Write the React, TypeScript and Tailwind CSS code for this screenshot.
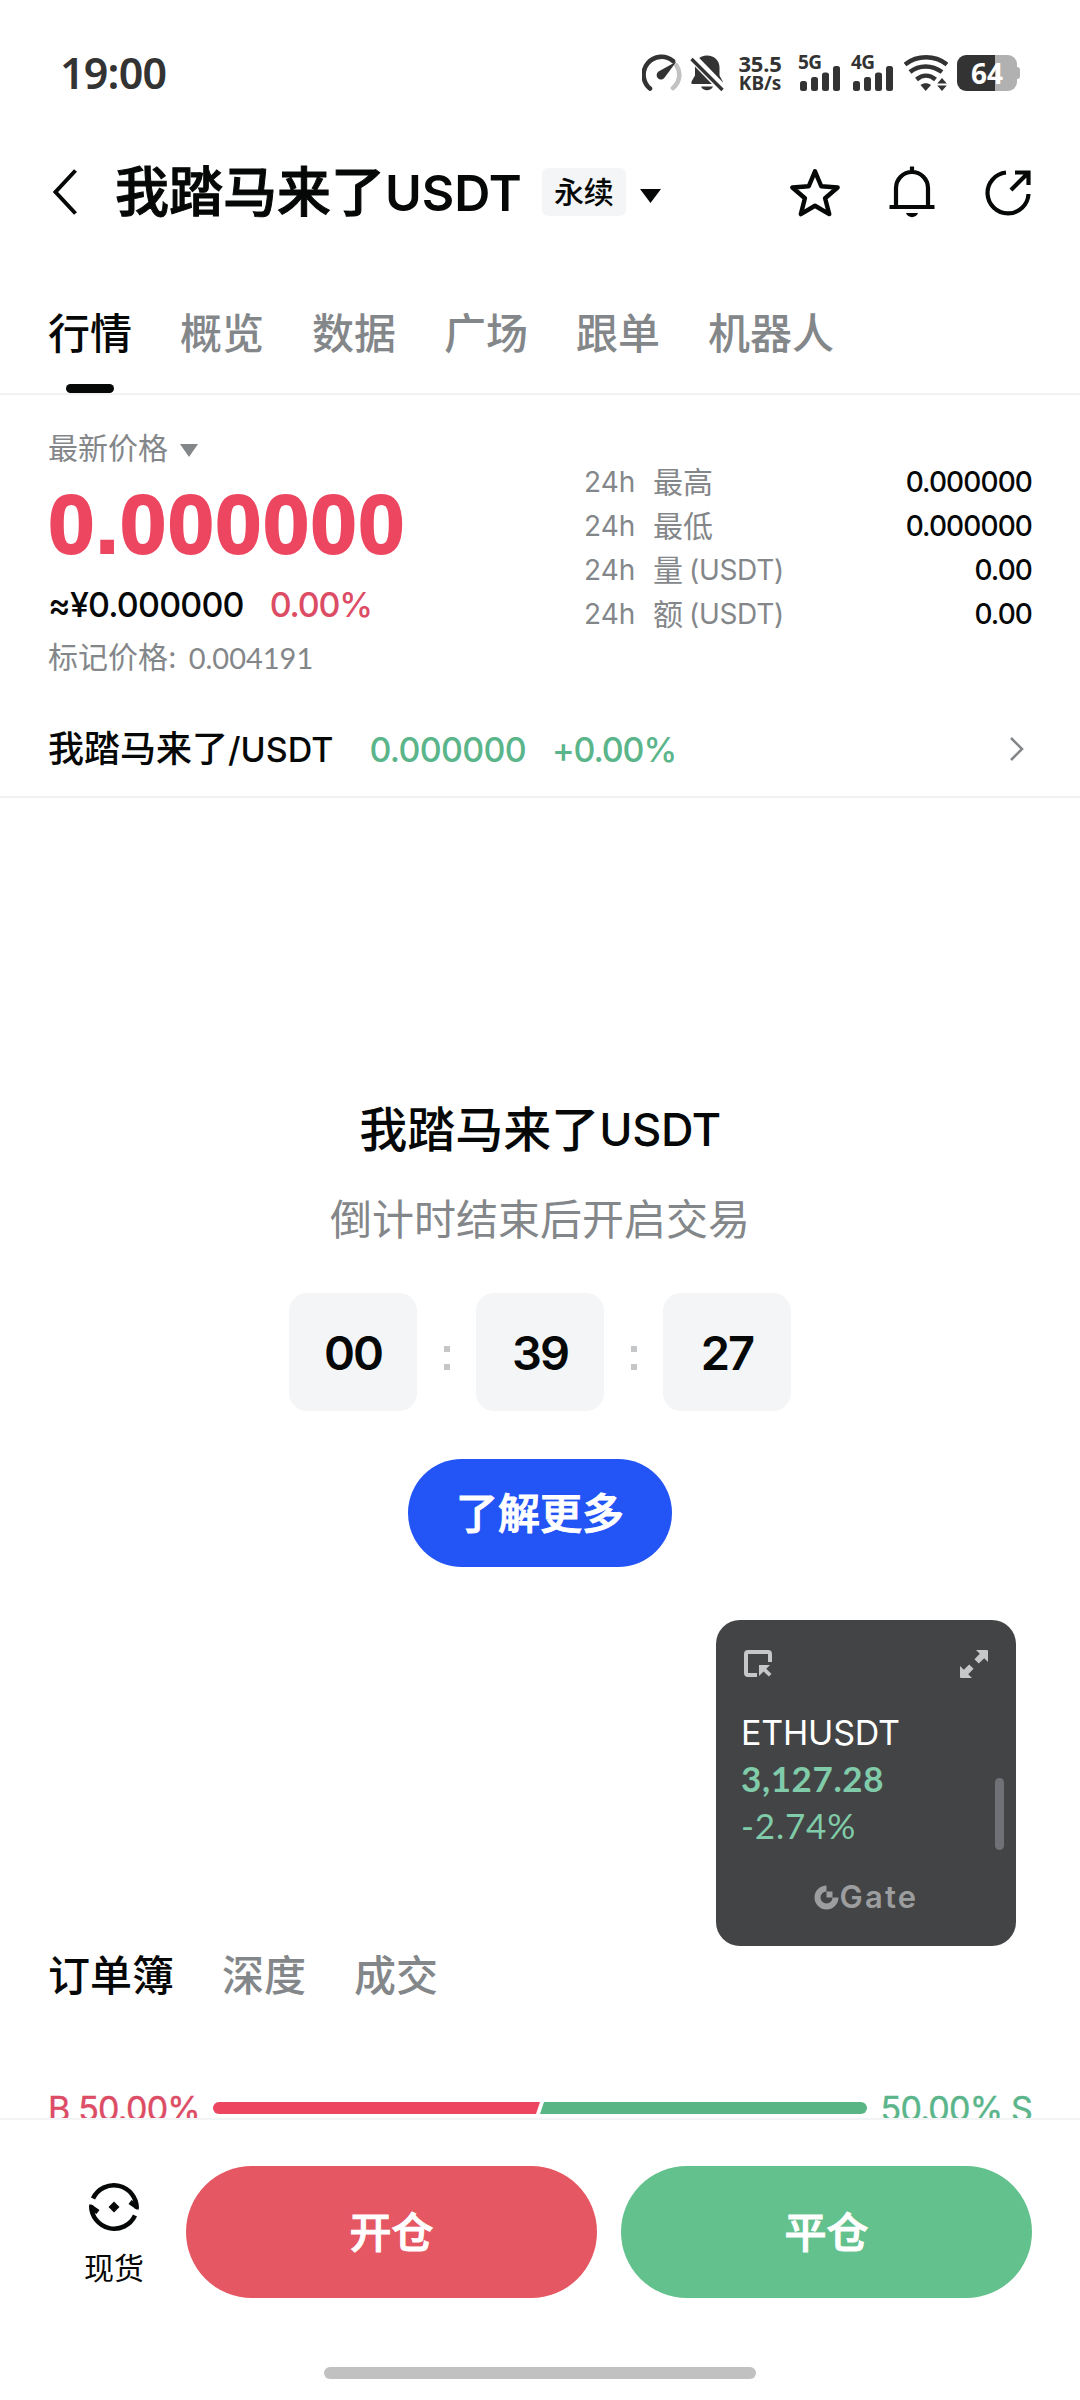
const TABS = ['行情', '概览', '数据', '广场', '跟单', '机器人'];
const BOOK_TABS = ['订单簿', '深度', '成交'];
const COUNTDOWN = ['00', '39', '27'];

const STATS = [
  { label: '最高', unit: '', value: '0.000000' },
  { label: '最低', unit: '', value: '0.000000' },
  { label: '量', unit: '(USDT)', value: '0.00' },
  { label: '额', unit: '(USDT)', value: '0.00' },
];

function Signal({ label }: { label: string }) {
  return (
    <div className="flex h-9 w-[42px] flex-col">
      <span className="h-[11px] font-['Noto_Sans'] text-[19px] leading-[15px] font-bold tracking-[-0.5px]">{label}</span>
      <svg width="42" height="25" viewBox="0 0 42 25" fill="currentColor">
        <rect x="2" y="15" width="7" height="10" rx="2.5" />
        <rect x="13" y="11" width="7" height="14" rx="2.5" />
        <rect x="24" y="6.500" width="7" height="18.500" rx="2.500" />
        <rect x="35" y="0" width="7" height="25" rx="2.5" />
      </svg>
    </div>
  );
}

function StatusBar() {
  return (
    <div className="flex h-[146px] items-center pr-[60px] pl-[60px] text-[#333333]">
      <span className="font-['Noto_Sans'] text-[43px] font-semibold tracking-[-0.8px]">19:00</span>
      <div className="ml-auto flex items-center">
        <svg width="40" height="38" viewBox="0 0 40 38" fill="none" strokeWidth="4.600" strokeLinecap="round">
          <path d="M34.500 11.500A17 17 0 0 1 31 34" stroke="#c2c2c2" />
          <path d="M8 34.500A17.500 17.500 0 1 1 31 7" stroke="currentColor" />
          <path d="M34.500 7.500L23 23a4.400 4.400 0 1 1-6.500-5.500z" fill="currentColor" />
        </svg>
        <svg className="ml-2" width="34" height="38" viewBox="0 0 34 38" fill="currentColor">
          <path d="M17 1.500c7.500 0 12.500 5 12.500 12v8l3.500 6.500v2H1.500v-2.500L5 21.500v-8c0-7 4.500-12 12-12z" />
          <path d="M11 32.500h12c-2 5-10 5-12 0z" />
          <path d="M2 3L34 36" stroke="#fff" strokeWidth="9" />
          <path d="M1.500 5L32.500 36" stroke="currentColor" strokeWidth="3.400" />
        </svg>
        <div className="ml-[13px] flex w-[46px] flex-col items-center font-['Noto_Sans'] leading-[20px] font-bold">
          <span className="text-[22px] tracking-[-0.2px]">35.5</span>
          <span className="text-[19px] tracking-[-0.1px]">KB/s</span>
        </div>
        <div className="ml-[15px]">
          <Signal label="5G" />
        </div>
        <div className="ml-[11px]">
          <Signal label="4G" />
        </div>
        <svg className="ml-[11px]" width="44" height="38" viewBox="0 0 44 38" fill="none" stroke="currentColor" strokeWidth="4.500">
          <path d="M1 10.500C13 .8 31 .8 43 10.500" />
          <path d="M6 18c9-7.500 22-7.500 32 0" />
          <path d="M12.500 25.500c6-5 13-5 19 0" />
          <path d="M16.500 31c3-2.500 7.500-2.500 10.500 0L21.700 37z" fill="currentColor" stroke="none" />
          <path d="M38 24l4.800 5.500h-9.600zM38 37l4.800-5.500h-9.600z" fill="currentColor" stroke="none" />
        </svg>
        <div className="ml-[9px] flex items-center">
          <div className="flex h-9 w-[60px] items-center justify-center rounded-[9px] bg-linear-to-r from-[#333333] from-64% to-[#b1b1b1] to-64%">
            <span className="font-['Noto_Sans'] text-[28px] font-bold text-white">64</span>
          </div>
          <div className="h-3 w-[3px] rounded-r-[3px] bg-[#b1b1b1]" />
        </div>
      </div>
    </div>
  );
}

function Header() {
  return (
    <header className="flex h-[92px] items-center pr-12 pl-[52px] text-[#060808]">
      <svg width="26" height="48" viewBox="0 0 26 48" fill="none" stroke="currentColor" strokeWidth="4">
        <path d="M23.500 2.500L3.500 24l20 21.500" />
      </svg>
      <h1 className="ml-[37px] flex items-center pt-[2px] text-[54px] leading-none font-medium [-webkit-text-stroke:1px_currentColor]">
        我踏马来了<span className="font-['Inter'] text-[50px] font-semibold [-webkit-text-stroke:0]">USDT</span>
      </h1>
      <span className="ml-5 flex h-12 w-[84px] items-center justify-center rounded-md bg-[#f4f5f6] pt-[1px] text-[30px] font-medium">永续</span>
      <svg className="mt-[7px] ml-[14px]" width="21" height="14" viewBox="0 0 21 14" fill="currentColor">
        <path d="M0 0h21L10.500 14z" />
      </svg>
      <div className="ml-auto flex items-center gap-12">
        <svg width="50" height="50" viewBox="0 0 52 52" fill="none" stroke="currentColor" strokeWidth="4.600" strokeLinejoin="round">
          <path d="M26 4.500l6.500 15.500 17 1.300-13 11.200 4.300 16.500L26 40.300 11.300 49l4.200-16.500-13-11.200 17-1.300z" />
        </svg>
        <svg width="48" height="52" viewBox="0 0 48 52" fill="none" stroke="currentColor" strokeWidth="4.200">
          <path d="M24 .5V6M8 41V22a16 16 0 0 1 32 0v19M1.500 41h45" />
          <path d="M18 47h12c-1.500 5.500-10.500 5.500-12 0z" fill="currentColor" stroke="none" />
        </svg>
        <svg width="48" height="48" viewBox="0 0 48 48" fill="none" stroke="currentColor" strokeWidth="4.200">
          <path d="M22 4.500A20.500 20.500 0 1 0 44.500 26" />
          <path d="M27 22L43 6M31 4.500h13.500V17" />
        </svg>
      </div>
    </header>
  );
}

function Tabs() {
  return (
    <nav className="flex h-[157px] gap-12 border-b-2 border-[#f1f2f3] px-12 pt-[66px] text-[42px] leading-[60px] font-medium text-[#84878a]">
      {TABS.map((tab, i) => (
        <div key={tab} className={i === 0 ? 'flex flex-col items-center text-[#060808]' : ''}>
          {tab}
          {i === 0 && <div className="mt-5 h-[9px] w-12 rounded-full bg-[#060808]" />}
        </div>
      ))}
    </nav>
  );
}

function PriceSummary() {
  return (
    <section className="flex h-[307px] justify-between px-12 pt-[31px]">
      <div className="flex flex-col text-[#84878a]">
        <div className="flex h-11 items-center text-[30px]">
          最新价格
          <svg className="mt-1 ml-3" width="18" height="13" viewBox="0 0 18 13" fill="currentColor">
            <path d="M0 0h18L9 13z" />
          </svg>
        </div>
        <div className="font-['Liberation_Sans'] text-[84px] leading-[108px] font-bold tracking-[0.9px] text-[#ed4660] [-webkit-text-stroke:1.8px_currentColor]">0.000000</div>
        <div className="flex h-[53px] items-center gap-[26px] text-[34px] font-medium">
          <span className="tracking-[-0.8px] text-[#060808]">≈¥0.000000</span>
          <span className="tracking-[-1.200px] text-[#dc4c65]">0.00%</span>
        </div>
        <div className="flex h-[52px] items-center gap-3 pt-[1px] text-[30px]">
          标记价格:<span className="font-['Lato'] text-[29px]">0.004191</span>
        </div>
      </div>
      <div className="w-[448px] pt-[34px] text-[28px]">
        {STATS.map((s) => (
          <div key={s.label} className="flex h-11 items-center text-[#84878a]">
            <span className="w-[69px]">24h</span>
            <span className="text-[30px]">{s.label}</span>
            <span className="ml-[6px] tracking-[-0.3px]">{s.unit}</span>
            <span className="ml-auto font-medium tracking-[-0.9px] text-[#060808]">{s.value}</span>
          </div>
        ))}
      </div>
    </section>
  );
}

function SpotPair() {
  return (
    <div className="flex h-24 items-center border-b-2 border-[#f1f2f3] px-12 text-[34px] font-medium">
      <div className="flex items-center text-[#060808]">
        <span className="text-[36px]">我踏马来了</span>
        <span>/USDT</span>
      </div>
      <span className="ml-9 tracking-[-0.7px] text-[#5ab58a]">0.000000</span>
      <span className="ml-[26px] tracking-[-1.100px] text-[#5ab58a]">+0.00%</span>
      <svg className="mr-2 ml-auto" width="15" height="26" viewBox="0 0 15 26" fill="none" stroke="#84878a" strokeWidth="2.600">
        <path d="M2 2l11 11L2 24" />
      </svg>
    </div>
  );
}

function Countdown() {
  return (
    <section className="flex flex-col items-center pt-[302px]">
      <h2 className="flex items-center text-[48px] leading-[60px] font-medium text-[#060808]">
        我踏马来了<span className="text-[45px] tracking-[-0.3px]">USDT</span>
      </h2>
      <p className="mt-[30px] text-[42px] leading-[60px] text-[#84878a]">倒计时结束后开启交易</p>
      <div className="mt-[43px] flex items-center">
        {COUNTDOWN.map((n, i) => (
          <div key={n} className="flex items-center">
            {i > 0 && (
              <div className="flex w-[59px] flex-col items-center gap-3 pt-3">
                <i className="size-[6px] bg-[#c4c6c8]" />
                <i className="size-[6px] bg-[#c4c6c8]" />
              </div>
            )}
            <div className="flex h-[118px] w-32 items-center justify-center rounded-[18px] bg-[#f4f5f7] pt-[2px] text-[47px] font-semibold tracking-[-2px] text-[#060808]">{n}</div>
          </div>
        ))}
      </div>
      <button className="mt-12 h-[108px] w-[264px] rounded-full bg-[#2354f5] text-[42px] font-medium text-white [-webkit-text-stroke:1px_currentColor]">了解更多</button>
    </section>
  );
}

function OrderBook() {
  return (
    <section className="mt-[379px] px-12">
      <div className="flex gap-12 text-[42px] leading-[60px] font-medium text-[#84878a]">
        {BOOK_TABS.map((tab, i) => (
          <span key={tab} className={i === 0 ? 'text-[#060808]' : ''}>{tab}</span>
        ))}
      </div>
      <div className="mt-[78px] flex h-12 items-center justify-between text-[34px] tracking-[-0.8px]">
        <span className="w-[165px] whitespace-nowrap text-[#dc4c65] [-webkit-text-stroke:0.4px_currentColor]">B 50.00%</span>
        <div className="flex h-3 flex-1 overflow-hidden rounded-full">
          <div className="flex-1 bg-[#ed4660] [clip-path:polygon(0_0,100%_0,calc(100%-4px)_100%,0_100%)]" />
          <div className="flex-1 bg-[#5ab585] [clip-path:polygon(4px_0,100%_0,100%_100%,0_100%)]" />
        </div>
        <span className="w-[165px] text-right whitespace-nowrap text-[#5ab58a] [-webkit-text-stroke:0.4px_currentColor]">50.00% S</span>
      </div>
    </section>
  );
}

function FloatingTicker() {
  return (
    <aside className="absolute top-[1620px] left-[716px] flex h-[326px] w-[300px] flex-col rounded-3xl bg-[#434445] px-[25px] pt-[29px]">
      <div className="flex justify-between px-[3px] text-[#c6c7c8]">
        <svg width="28" height="29" viewBox="0 0 28 29" fill="none" stroke="currentColor" strokeWidth="4">
          <path d="M13 26H4a2 2 0 0 1-2-2V5a2 2 0 0 1 2-2h20a2 2 0 0 1 2 2v8" />
          <path d="M15 16h11l-3.700 3.700 5.200 5.200-2.700 2.700-5.200-5.200L15 27z" fill="currentColor" stroke="none" />
        </svg>
        <svg width="28" height="29" viewBox="0 0 28 29" fill="currentColor">
          <path d="M16 1h11a1 1 0 0 1 1 1v11l-3.800-3.800-5.400 5.400-4.400-4.400 5.400-5.400z" />
          <path d="M12 29H1a1 1 0 0 1-1-1V17l3.800 3.800 5.400-5.400 4.400 4.400-5.400 5.400z" />
        </svg>
      </div>
      <div className="mt-[31px] text-[34px] leading-[48px] tracking-[-0.2px] text-white">ETHUSDT</div>
      <div className="font-['Lato'] text-[35px] leading-[43px] font-bold tracking-[0.6px] text-[#80cba9]">3,127.28</div>
      <div className="font-['Lato'] text-[35px] leading-[50px] tracking-[0.8px] text-[#80cba9]">-2.74%</div>
      <div className="mt-[29px] flex items-center justify-center gap-[1px] text-[#9c9d9e]">
        <svg width="25" height="25" viewBox="0 0 25 25" fill="none" stroke="currentColor" strokeWidth="6">
          <path d="M12.500 3.500A9 9 0 1 0 21.500 12.500" />
          <path d="M12.500 6.500h6v6h-6z" fill="currentColor" stroke="none" />
        </svg>
        <span className="text-[31px] leading-[36px] font-semibold tracking-[2.200px]">Gate</span>
      </div>
      <div className="absolute top-[158px] right-3 h-[72px] w-[9px] rounded-full bg-[#707176]" />
    </aside>
  );
}

function Footer() {
  return (
    <footer className="h-[282px] border-t-2 border-[#f3f4f5] bg-white pt-[46px]">
      <div className="flex h-[132px] items-center pr-12 pl-[42px]">
        <div className="flex w-36 flex-col items-center pt-[6px] text-[#060808]">
          <svg width="52" height="52" viewBox="0 0 52 52" fill="none" stroke="currentColor" strokeWidth="4.500">
            <path d="M5 17.500A23 23 0 0 1 48.800 27.500" />
            <path d="M47 34.500A23 23 0 0 1 3.200 24.500" />
            <path d="M40.500 23l3-4 5 3 2.500 6.500h-2.500zM11.500 29l-3 4-5-3L1 23.500h2.500z" fill="currentColor" stroke="none" />
            <path d="M26 20.500l5.500 5.500-5.500 5.500-5.500-5.500z" fill="currentColor" stroke="none" />
          </svg>
          <span className="mt-[13px] text-[30px] leading-[44px]">现货</span>
        </div>
        <button className="h-full flex-1 rounded-full bg-[#e55762] pt-[1px] text-[42px] font-medium text-white [-webkit-text-stroke:1px_currentColor]">开仓</button>
        <button className="ml-6 h-full flex-1 rounded-full bg-[#63c18d] pt-[1px] text-[42px] font-medium text-white [-webkit-text-stroke:1px_currentColor]">平仓</button>
      </div>
      <div className="mx-auto mt-[69px] h-3 w-[432px] rounded-full bg-[#c1c1c1]" />
    </footer>
  );
}

export default function App() {
  return (
    <div className="relative h-[2400px] w-[1080px] overflow-hidden bg-white font-['Inter','Noto_Sans_CJK_SC',sans-serif]">
      <StatusBar />
      <Header />
      <Tabs />
      <PriceSummary />
      <SpotPair />
      <main className="h-[1320px] overflow-hidden">
        <Countdown />
        <OrderBook />
      </main>
      <Footer />
      <FloatingTicker />
    </div>
  );
}
